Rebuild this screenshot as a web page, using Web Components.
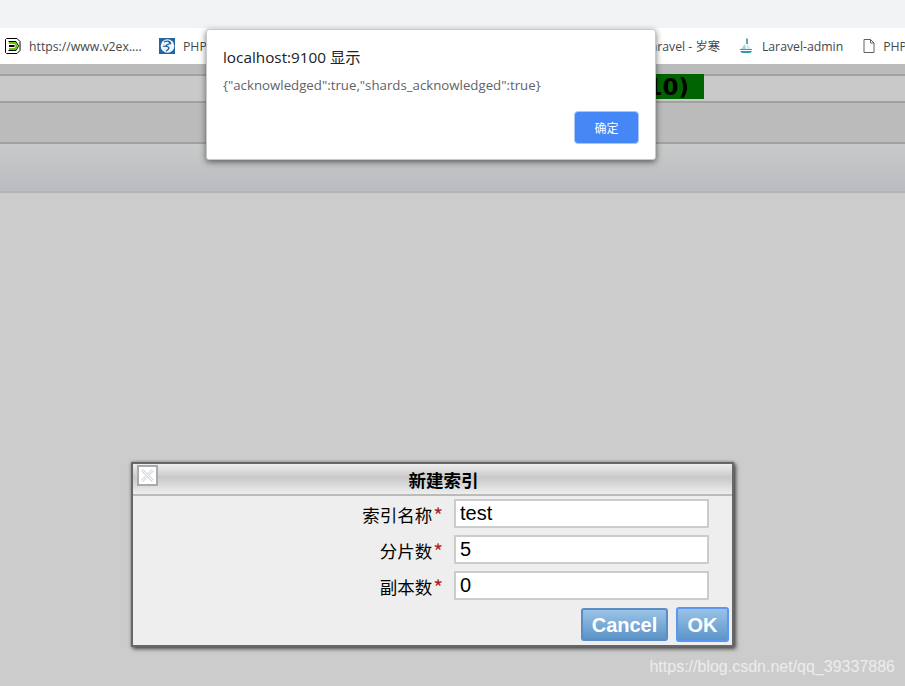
<!DOCTYPE html>
<html lang="zh"><head><meta charset="utf-8">
<style>
html,body{margin:0;padding:0;height:686px;overflow:hidden;background:#ccc;}
body{position:relative;font-family:"Liberation Sans","Noto Sans CJK SC",sans-serif;}
</style></head>
<body>
<browser-bar></browser-bar>
<es-page></es-page>
<form-dialog></form-dialog>
<alert-box></alert-box>
<water-mark>https://blog.csdn.net/qq_39337886</water-mark>
<script>
function def(name,html){
  customElements.define(name,class extends HTMLElement{
    constructor(){super();this.attachShadow({mode:"open"}).innerHTML=html;}
  });
}
def("browser-bar",`<style>
:host{display:block;font:12.25px/16px "Open Sans","Noto Sans CJK SC",sans-serif;color:#45484c;}
.tabs{height:28px;background:#f1f3f5;}
.bar{height:36px;background:#fff;display:flex;align-items:center;box-sizing:border-box;padding:0 0 0 5px;white-space:nowrap;overflow:hidden;}
.i{display:flex;align-items:center;flex:none;}
.i span,.fill .i{padding-top:2px;}
svg{flex:none;display:block;}
.fill{flex:1;justify-content:flex-end;display:flex;}
</style>
<div class="tabs"></div>
<div class="bar">
<span class="i"><svg width="16" height="16" viewBox="0 0 16 16"><path d="M1.500.5h10.500l3 3v9l-3 3H1.500l-1-1v-13z" fill="#fff" stroke="#000"/><path d="M3.500 3.500h7.500l2.500 4.500-2.500 4.500H3.500" fill="none" stroke="#000" stroke-width="1"/><path d="M4 5h6.200l1.600 3-1.600 3H4" fill="none" stroke="#62c800" stroke-width="2"/><path d="M4 8h5.500" stroke="#000" stroke-width="2"/></svg><span style="margin-left:8px;width:113px">https://www.v2ex....</span></span>
<span class="i" style="margin-left:17px"><svg width="16" height="16" viewBox="0 0 16 16"><rect width="16" height="16" fill="#25659f"/><circle cx="8.500" cy="8" r="6.800" fill="#f2f6fa"/><path d="M5 4c3-1.500 6-1 6.500 1-1 2-4 1-4.500 3 1 1 3 0 3 2-.5 2-2 2.500-3 3M4 8c1 .5 2 .5 2.500 0M9 3l3 3" fill="none" stroke="#25659f" stroke-width="1.300"/></svg><span style="margin-left:8px">PHP</span></span>
<span class="fill"><span class="i">Laravel - 岁寒</span></span>
<span class="i" style="margin-left:19px"><svg width="14" height="16" viewBox="0 0 14 16"><path d="M7 0.500h2V6H7z" fill="#5aa7b8"/><path d="M6 6 2 11h5z" fill="#a9d6dc"/><path d="M8 6l4 5H8z" fill="#cfe8ea"/><path d="M1 11.500h12" stroke="#3f9db2"/><path d="M1 13h12l-1.500 2H3z" fill="#2a9ab2"/></svg><span style="margin-left:9px">Laravel-admin</span></span>
<span class="i" style="margin-left:20px;margin-right:-2px"><svg width="12" height="16" viewBox="0 0 12 16"><path d="M1 1.500h6.500l3.500 3.500v9.500H1z" fill="#fff" stroke="#5f6368"/><path d="M7.500 1.500V5H11" fill="none" stroke="#5f6368"/></svg><span style="margin-left:8px">PHP</span></span>
</div>`);
def("es-page",`<style>
:host{display:block;}
.r{border-bottom:2px solid #a1a1a1;box-sizing:border-box;}
.r1{height:12px;background:#bbb;}
.r2{height:27px;background:#c9c9c9;display:flex;justify-content:flex-end;padding-right:201px;}
.r3{height:41px;background:#bbb;}
.r4{height:49px;background:linear-gradient(#c8c9c9,#bbbcc0);border-bottom-color:#b4b4b4;}
.badge{height:25px;margin-top:-2px;width:110px;background:#006400;color:#000;font:bold 23px/27px "DejaVu Sans",sans-serif;text-align:right;padding-right:15px;box-sizing:border-box;overflow:hidden;}
</style>
<div class="r r1"></div>
<div class="r r2"><div class="badge">10)</div></div>
<div class="r r3"></div>
<div class="r r4"></div>`);
def("alert-box",`<style>
:host{position:absolute;left:206px;top:29px;width:450px;height:131px;box-sizing:border-box;background:#fff;border:1px solid #c9c9c9;border-radius:3px;box-shadow:0 2px 6px rgba(0,0,0,.55);padding:16px 16px 15px;display:flex;flex-direction:column;font-family:"Open Sans","Noto Sans CJK SC",sans-serif;}
.t{font-size:15.3px;line-height:22px;color:#202124;}
.m{font-size:13.25px;line-height:18px;color:#5f6368;margin-top:8px;white-space:nowrap;}
.f{margin-top:auto;display:flex;justify-content:flex-end;}
button{width:65px;height:33px;background:#4687f8;color:#fff;border:1px solid #a9c6f7;border-radius:4px;font:12px/16px "Noto Sans CJK SC",sans-serif;padding:0;}
</style>
<div class="t">localhost:9100 显示</div>
<div class="m">{"acknowledged":true,"shards_acknowledged":true}</div>
<div class="f"><button>确定</button></div>`);
def("form-row",`<style>
:host{display:grid;grid-template-columns:310px 255px;column-gap:11px;height:29px;align-items:center;}
.l{font:17.5px/24px "Noto Sans CJK SC",sans-serif;color:#000;white-space:nowrap;display:flex;justify-content:flex-end;align-items:center;padding-top:2px;}
.s{color:#b22222;font-size:21px;line-height:24px;margin-left:1px;}
.v{box-sizing:border-box;height:29px;border:2px solid #ccc;background:#fff;font:20px/25px "Liberation Sans",sans-serif;color:#000;padding:0 4px;}
</style>
<div class="l"><slot name="label"></slot><span class="s">*</span></div>
<div class="v"><slot></slot></div>`);
def("form-dialog",`<style>
:host{position:absolute;left:131px;top:462px;width:603px;height:185px;box-sizing:border-box;border:2px solid #666;background:#eee;box-shadow:2px 2px 4px rgba(0,0,0,.6),0 0 3px rgba(0,0,0,.3);display:flex;flex-direction:column;}
.h{flex:none;height:32px;box-sizing:border-box;border-bottom:2px solid #bbb;background:linear-gradient(#eee,#c9c9c9 45%,#eee);display:grid;grid-template-columns:21px 1fr;padding:0 3px 0 4px;align-items:center;}
.x{box-sizing:border-box;width:21px;height:21px;border:2px solid #aaa;background:#fff;display:block;align-self:start;margin-top:1px;}
.x svg{display:block;}
.ti{text-align:center;font:bold 17.5px/32px "Noto Sans CJK SC",sans-serif;color:#000;}
.b{flex:1;display:flex;flex-direction:column;gap:7px;padding-top:3px;}
.f{display:flex;justify-content:flex-end;align-items:center;gap:8px;padding-right:3px;}
button{box-sizing:border-box;color:#fff;font:bold 20px/26px "Liberation Sans",sans-serif;padding:0;border-radius:3px;background:linear-gradient(#9ac3e6,#5b94c8);}
.c{width:87px;height:33px;border:2px solid #5b8dc4;}
.o{width:53px;height:35px;border:2px solid #5c96f2;}
</style>
<div class="h"><span class="x"><svg width="17" height="17" viewBox="0 0 17 17"><path d="M3 3l11 11M14 3 3 14" stroke="#cfdbe6" stroke-width="3"/><path d="M3 3l11 11M14 3 3 14" stroke="#fff" stroke-width="1"/></svg></span><div class="ti">新建索引</div></div>
<div class="b">
<form-row><span slot="label">索引名称</span>test</form-row>
<form-row><span slot="label">分片数</span>5</form-row>
<form-row><span slot="label">副本数</span>0</form-row>
<div class="f"><button class="c">Cancel</button><button class="o">OK</button></div>
</div>`);
def("water-mark",`<style>
:host{position:absolute;right:10px;top:657px;font:16px/19px "Liberation Sans",sans-serif;color:rgba(255,255,255,.5);white-space:nowrap;text-shadow:0 0 1px rgba(255,255,255,.3);}
</style><slot></slot>`);
</script>
</body></html>
